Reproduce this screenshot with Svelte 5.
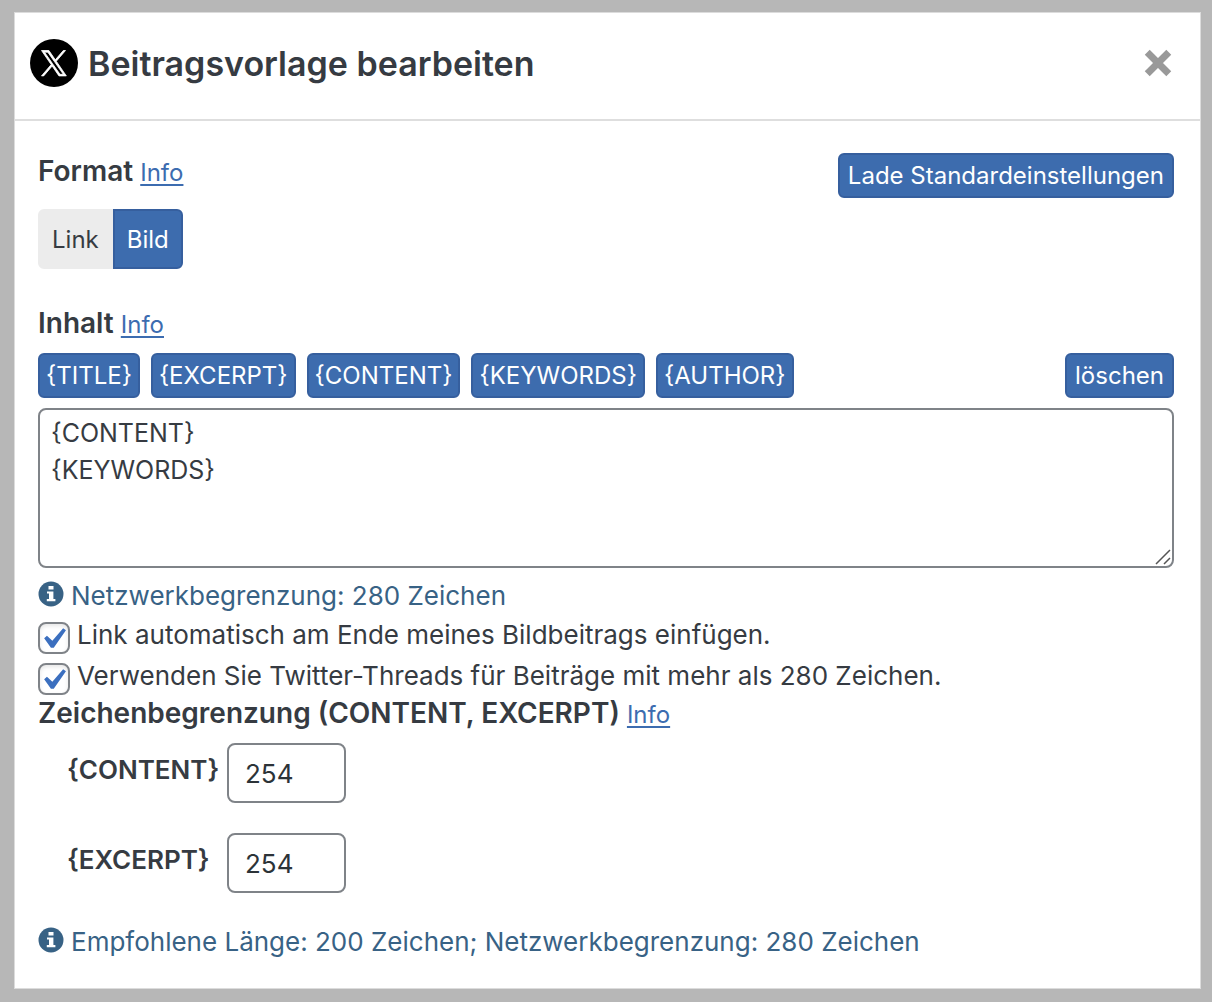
<script>
    let tags = ['{TITLE}', '{EXCERPT}', '{CONTENT}', '{KEYWORDS}', '{AUTHOR}']
    let format = $state('Bild')
    let content = $state('{CONTENT}\n{KEYWORDS}')
    let options = $state([
        { id: 'add-link', text: 'Link automatisch am Ende meines Bildbeitrags einfügen.', checked: true },
        { id: 'threads', text: 'Verwenden Sie Twitter-Threads für Beiträge mit mehr als 280 Zeichen.', checked: true }
    ])
    let limits = $state([
        { id: 'limit-content', name: '{CONTENT}', value: '254' },
        { id: 'limit-excerpt', name: '{EXCERPT}', value: '254' }
    ])

    function loadDefaults(){
        format = 'Bild'
        content = '{CONTENT}\n{KEYWORDS}'
        limits.forEach((limit) => limit.value = '254')
    }
</script>

{#snippet infoIcon()}
    <svg class="info-icon" viewBox="0 0 26 26" aria-hidden="true">
        <circle cx="13" cy="13" r="12.5" fill="currentColor" />
        <path fill="#fff" d="M10.5 5h5v3.6h-5zM9 10.4h6.4v7.6h2v2.2H8.8v-2.2h2.2v-5.4H9z" />
    </svg>
{/snippet}

<div class="modal" role="dialog" aria-labelledby="modal-title">
    <header class="modal-header">
        <svg class="logo" viewBox="0 0 48 48" aria-hidden="true">
            <circle cx="24" cy="24" r="24" />
            <path fill="#fff" stroke="#fff" stroke-width="40" transform="translate(11.5 11.5) scale(.0207)" d="M714.163 519.284L1160.89 0H1055.03L667.137 450.887L357.328 0H0L468.492 681.821L0 1226.37H105.866L515.491 750.218L842.672 1226.37H1200L714.137 519.284ZM569.165 687.828L521.697 619.934L144.011 79.694H306.615L611.412 515.685L658.88 583.579L1055.08 1150.3H892.476L569.165 687.854Z" />
        </svg>
        <h1 id="modal-title">Beitragsvorlage bearbeiten</h1>
        <button class="close" aria-label="Schließen">
            <svg viewBox="0 0 26 26" aria-hidden="true">
                <path d="M3 3l20 20M23 3L3 23" stroke="#999" stroke-width="6.5" />
            </svg>
        </button>
    </header>

    <div class="modal-body">
        <div class="row">
            <h2>Format <a href="#format">Info</a></h2>
            <button class="btn" onclick={loadDefaults}>Lade Standardeinstellungen</button>
        </div>
        <div class="toggle">
            {#each ['Link', 'Bild'] as name}
                <button class:active={format === name} onclick={() => format = name}>{name}</button>
            {/each}
        </div>

        <h2 class="content-title">Inhalt <a href="#inhalt">Info</a></h2>
        <div class="row">
            <div class="tags">
                {#each tags as tag}
                    <button class="btn" onclick={() => content += tag}>{tag}</button>
                {/each}
            </div>
            <button class="btn" onclick={() => content = ''}>löschen</button>
        </div>
        <div class="editor">
            <textarea aria-label="Inhalt" spellcheck="false" bind:value={content}></textarea>
            <svg class="grip" viewBox="0 0 16 16" aria-hidden="true">
                <path d="M1 15L15 1M9 15l6-6" stroke="#555" stroke-width="1.5" />
            </svg>
        </div>

        <p class="info">{@render infoIcon()}Netzwerkbegrenzung: 280 Zeichen</p>
        <div class="options">
            {#each options as option}
                <div class="option">
                    <span class="check">
                        <input type="checkbox" id={option.id} bind:checked={option.checked}>
                        {#if option.checked}
                            <svg viewBox="0 0 20 20" aria-hidden="true">
                                <path fill="#3b6fbf" d="M14.83 4.89l1.34.94-5.81 8.38H9.02L5.78 9.67l1.34-1.25 2.57 2.4z" />
                            </svg>
                        {/if}
                    </span>
                    <label for={option.id}>{option.text}</label>
                </div>
            {/each}
        </div>

        <h2>Zeichenbegrenzung (CONTENT, EXCERPT) <a href="#limit">Info</a></h2>
        <div class="limits">
            {#each limits as limit}
                <label for={limit.id}>{limit.name}</label>
                <input type="text" id={limit.id} bind:value={limit.value}>
            {/each}
        </div>
        <p class="info">{@render infoIcon()}Empfohlene Länge: 200 Zeichen; Netzwerkbegrenzung: 280 Zeichen</p>
    </div>
</div>

<style>
    :global(body){
        background-color: #b7b7b7;
        font-family: Inter, "Liberation Sans", sans-serif;
        font-size: 26px;
        line-height: 36px;
        color: #363b42;
    }
    .modal{
        margin: 12px 11px 12px 14px;
        background-color: #fff;
        border: 1px solid #dcdcdc;
    }
    .modal-header{
        display: flex;
        align-items: center;
        gap: 10px;
        height: 108px;
        box-sizing: border-box;
        padding: 0 28px 6px 15px;
        border-bottom: 2px solid #dedede;
    }
    .logo{
        width: 48px;
        height: 48px;
    }
    h1{
        flex: 1;
        margin: 0;
        padding-top: 2px;
        font-size: 34px;
        font-weight: 600;
        line-height: 40px;
    }
    .close{
        display: flex;
        padding: 0;
        border: 0;
        background: none;
        cursor: pointer;
    }
    .close svg{
        width: 28px;
        height: 28px;
    }
    .modal-body{
        padding: 32px 26px 20px 23px;
    }
    .row{
        display: flex;
        justify-content: space-between;
        align-items: flex-start;
    }
    h2{
        margin: 0;
        font-size: 28px;
        font-weight: 600;
        line-height: 36px;
    }
    h2 a{
        font-size: 24px;
        font-weight: 400;
        color: #3c6cb0;
        text-decoration-thickness: 2px;
        text-underline-offset: 3px;
    }
    button, input, textarea{
        font-family: inherit;
        color: inherit;
    }
    .btn{
        height: 45px;
        padding: 0 8px;
        border: 2px solid #365f9e;
        border-radius: 6px;
        background-color: #3d6cae;
        color: #fff;
        font-size: 24px;
        line-height: 36px;
        cursor: pointer;
    }
    .toggle{
        display: flex;
        margin-top: 11px;
    }
    .toggle button{
        height: 60px;
        padding: 0 12px;
        border: 2px solid #ececec;
        border-radius: 6px 0 0 6px;
        background-color: #ececec;
        font-size: 24px;
        cursor: pointer;
    }
    .toggle button + button{
        border-radius: 0 6px 6px 0;
    }
    .toggle .active{
        border-color: #365f9e;
        background-color: #3d6cae;
        color: #fff;
    }
    .content-title{
        margin: 36px 0 10px;
    }
    .tags{
        display: flex;
        gap: 11px;
    }
    .tags .btn{
        padding: 0 6px;
    }
    .editor{
        position: relative;
        margin-top: 10px;
    }
    textarea{
        display: block;
        box-sizing: border-box;
        width: 100%;
        height: 160px;
        padding: 5px 11px;
        border: 2px solid #7f8388;
        border-radius: 8px;
        background-color: #fff;
        font-size: 25px;
        line-height: 37px;
        resize: none;
    }
    .grip{
        position: absolute;
        right: 3px;
        bottom: 3px;
        width: 16px;
        height: 16px;
        pointer-events: none;
    }
    .info{
        display: flex;
        align-items: flex-start;
        gap: 7px;
        margin: 10px 0 8px;
        color: #386285;
    }
    .info-icon{
        width: 26px;
        height: 26px;
        margin-top: 3px;
    }
    .options{
        display: grid;
        gap: 9px;
    }
    .option{
        display: flex;
        align-items: flex-start;
        gap: 7px;
        height: 32px;
    }
    .option label{
        margin-top: -5px;
    }
    .check{
        position: relative;
        width: 32px;
        height: 32px;
    }
    .check input{
        display: block;
        width: 32px;
        height: 32px;
        margin: 0;
        appearance: none;
        border: 2px solid #7f8388;
        border-radius: 8px;
        background-color: #fff;
        box-shadow: inset 0 2px 4px rgba(0,0,0,.1);
    }
    .check svg{
        position: absolute;
        top: -4px;
        left: -6px;
        width: 42px;
        height: 42px;
        pointer-events: none;
    }
    .limits{
        display: grid;
        grid-template-columns: 150px 119px;
        column-gap: 10px;
        row-gap: 30px;
        margin: 10px 0 31px 29px;
    }
    .limits label{
        margin-top: 9px;
        font-weight: 600;
    }
    .limits input{
        box-sizing: border-box;
        width: 100%;
        height: 60px;
        padding: 0 16px;
        border: 2px solid #7f8388;
        border-radius: 8px;
        color: #2c3338;
        font-size: 26px;
    }
</style>
